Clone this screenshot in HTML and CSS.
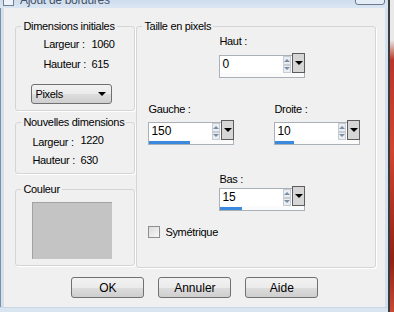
FILE: index.html
```html
<!DOCTYPE html>
<html lang="fr">
<head>
    <meta charset="UTF-8">
    <title>Ajout de bordures</title>
    <link rel="stylesheet" href="styles.css">
</head>
<body>
    <div class="window">
        <!-- barre de titre (coupée) -->
        <div class="titlebar">
            <span class="title-icon"></span>
            <span class="title-text">Ajout de bordures</span>
            <span class="close-btn"></span>
        </div>

        <div class="frame-row">
            <div class="frame-left"></div>
            <div class="dialog">
                <div class="panels">
                    <div class="left-col">
                        <fieldset class="group group-init">
                            <legend>Dimensions initiales</legend>
                            <div class="group-body">
                                <div class="dim-row"><span class="dim-label">Largeur :</span><span>1060</span></div>
                                <div class="dim-row"><span class="dim-label">Hauteur :</span><span>615</span></div>
                                <div class="select">
                                    <span>Pixels</span>
                                    <span class="select-arrow"></span>
                                </div>
                            </div>
                        </fieldset>

                        <fieldset class="group group-new">
                            <legend>Nouvelles dimensions</legend>
                            <div class="group-body">
                                <div class="dim-row"><span class="dim-label">Largeur :</span><span class="dim-value">1220</span></div>
                                <div class="dim-row"><span class="dim-label">Hauteur :</span><span>630</span></div>
                            </div>
                        </fieldset>

                        <fieldset class="group group-color">
                            <legend>Couleur</legend>
                            <div class="group-body">
                                <div class="swatch"></div>
                            </div>
                        </fieldset>
                    </div>

                    <fieldset class="group group-size">
                        <legend>Taille en pixels</legend>
                        <div class="group-body">
                            <div class="size-row row-top">
                                <div class="field">
                                    <span class="field-label">Haut :</span>
                                    <div class="spin">
                                        <div class="spin-main">
                                            <span class="spin-input">0</span>
                                            <span class="spin-arrows"><i class="up"></i><i class="down"></i></span>
                                            <span class="spin-drop"></span>
                                        </div>
                                        <div class="spin-track"><div class="spin-fill" style="width: 0px"></div></div>
                                    </div>
                                </div>
                            </div>

                            <div class="size-row row-mid">
                                <div class="field">
                                    <span class="field-label">Gauche :</span>
                                    <div class="spin">
                                        <div class="spin-main">
                                            <span class="spin-input">150</span>
                                            <span class="spin-arrows"><i class="up"></i><i class="down"></i></span>
                                            <span class="spin-drop"></span>
                                        </div>
                                        <div class="spin-track"><div class="spin-fill" style="width: 41px"></div></div>
                                    </div>
                                </div>
                                <div class="field field-right">
                                    <span class="field-label">Droite :</span>
                                    <div class="spin">
                                        <div class="spin-main">
                                            <span class="spin-input">10</span>
                                            <span class="spin-arrows"><i class="up"></i><i class="down"></i></span>
                                            <span class="spin-drop"></span>
                                        </div>
                                        <div class="spin-track"><div class="spin-fill" style="width: 19px"></div></div>
                                    </div>
                                </div>
                            </div>

                            <div class="size-row row-bottom">
                                <div class="field">
                                    <span class="field-label">Bas :</span>
                                    <div class="spin">
                                        <div class="spin-main">
                                            <span class="spin-input">15</span>
                                            <span class="spin-arrows"><i class="up"></i><i class="down"></i></span>
                                            <span class="spin-drop"></span>
                                        </div>
                                        <div class="spin-track"><div class="spin-fill" style="width: 22px"></div></div>
                                    </div>
                                </div>
                            </div>

                            <label class="check-row">
                                <span class="checkbox"></span>
                                <span>Symétrique</span>
                            </label>
                        </div>
                    </fieldset>
                </div>

                <div class="buttons">
                    <button class="btn">OK</button>
                    <button class="btn">Annuler</button>
                    <button class="btn">Aide</button>
                </div>
            </div>
            <div class="frame-right"></div>
        </div>

        <div class="bottom-strip"></div>
    </div>
    <div class="backdrop"></div>
</body>
</html>
```

FILE: styles.css
```css
* {
    margin: 0;
    padding: 0;
    box-sizing: border-box;
}

body {
    font-family: 'Liberation Sans', Arial, sans-serif;
    font-size: 11px;
    letter-spacing: -0.3px;
    color: #000;
    width: 394px;
    height: 312px;
    overflow: hidden;
    display: flex;
    background: #f0f0f0;
}

.window {
    width: 390px;
    display: flex;
    flex-direction: column;
    border-right: 2px solid #3c3c3c;
}

/* barre de titre */
.titlebar {
    height: 8px;
    background: linear-gradient(#cfdcec, #dbe6f3);
    display: flex;
    align-items: flex-end;
    overflow: hidden;
    padding-left: 3px;
}

.title-icon {
    width: 11px;
    height: 14px;
    margin-bottom: 2px;
    border: 1px solid #6f7f92;
    background: #eef3f9;
}

.title-text {
    margin-left: 6px;
    margin-bottom: 2px;
    font-size: 12px;
    line-height: 12px;
    color: #44546a;
}

.close-btn {
    margin-left: auto;
    margin-right: 3px;
    width: 30px;
    height: 14px;
    align-self: flex-start;
    margin-top: -9px;
    border: 1px solid #6b7a8e;
    border-radius: 0 0 3px 3px;
    background: #e4ecf5;
}

.frame-row {
    flex: 1;
    display: flex;
}

.frame-left {
    width: 5px;
    background: linear-gradient(90deg, #7d8ea2 0, #7d8ea2 1px, #d4e0ee 1px);
}

.frame-right {
    width: 3px;
    background: #d4e0ee;
}

.bottom-strip {
    height: 5px;
    background: #dae5f2;
    border-top: 1px solid #c9d6e6;
}

.backdrop {
    flex: 1;
    background: linear-gradient(#e9e9e9 0, #e9e9e9 40px, #b9352a 60px, #d2452e 150px, #8e2216 260px, #c74a35);
}

/* corps du dialogue */
.dialog {
    flex: 1;
    display: flex;
    flex-direction: column;
    background: #f0f0f0;
    padding: 11px 9px 0 11px;
}

.panels {
    display: flex;
    gap: 1px;
}

.left-col {
    width: 120px;
    display: flex;
    flex-direction: column;
}

.group {
    border: 1px solid #d5d5d5;
    border-radius: 3px;
    min-width: 0;
    padding: 0;
    box-shadow: 1px 1px 0 #fff;
}

.group legend {
    margin-left: 5px;
    padding: 0 2px;
    height: 14px;
    line-height: 14px;
    white-space: nowrap;
}

.group-init {
    height: 92px;
    margin-bottom: 4px;
}

.group-init .group-body {
    padding: 1px 0 0 15px;
}

.group-init .dim-row {
    height: 20px;
    line-height: 20px;
    padding-left: 12px;
}

.group-new {
    height: 59px;
    margin-bottom: 8px;
}

.group-new .group-body {
    padding: 4px 0 0 16px;
}

.group-new .dim-row {
    height: 18px;
    line-height: 18px;
}

.dim-row {
    display: flex;
}

.dim-label {
    width: 48px;
}

.dim-value {
    position: relative;
    top: -2px;
}

.select {
    margin-top: 10px;
    width: 81px;
    height: 20px;
    border: 1px solid #707070;
    border-radius: 3px;
    background: linear-gradient(#f2f2f2 0, #ebebeb 50%, #dddddd 50%, #cfcfcf 100%);
    display: flex;
    align-items: center;
    padding: 0 5px 0 3px;
}

.select-arrow {
    margin-left: auto;
    border-left: 4px solid transparent;
    border-right: 4px solid transparent;
    border-top: 4px solid #000;
}

.group-color {
    height: 84px;
}

.group-color .group-body {
    padding: 6px 0 0 16px;
}

.swatch {
    width: 80px;
    height: 57px;
    background: #c4c4c4;
    border-top: 1px solid #a2a2a2;
    border-left: 1px solid #a2a2a2;
}

/* taille en pixels */
.group-size {
    width: 240px;
    height: 249px;
}

.group-size .group-body {
    padding: 1px 0 0 11px;
}

.size-row {
    display: flex;
}

.row-top {
    padding-left: 71px;
}

.row-mid {
    margin-top: 24px;
}

.row-bottom {
    margin-top: 27px;
    padding-left: 71px;
}

.field {
    width: 86px;
    display: flex;
    flex-direction: column;
}

.field-right {
    margin-left: 40px;
}

.field-label {
    height: 14px;
    line-height: 14px;
    margin-bottom: 7px;
}

.row-mid .field-label {
    margin-bottom: 6px;
}

.row-bottom .field-label {
    margin-bottom: 2px;
}

.spin {
    display: flex;
    flex-direction: column;
}

.spin-main {
    display: flex;
    height: 18px;
}

.spin-input {
    flex: 1;
    background: #fff;
    border: 1px solid #a9b0b8;
    border-right: none;
    border-bottom: none;
    padding-left: 2px;
    font-size: 12px;
    line-height: 16px;
    letter-spacing: 0;
}

.spin-arrows {
    width: 10px;
    background: #fff;
    border-top: 1px solid #a9b0b8;
    display: flex;
    flex-direction: column;
}

.spin-arrows i {
    flex: 1;
    margin: 0 1px;
    background: #eaeef3;
    border: 1px solid #c6ccd4;
    display: flex;
    align-items: center;
    justify-content: center;
}

.spin-arrows .up::after {
    content: "";
    border-left: 3px solid transparent;
    border-right: 3px solid transparent;
    border-bottom: 3px solid #7b8ca3;
}

.spin-arrows .down::after {
    content: "";
    border-left: 3px solid transparent;
    border-right: 3px solid transparent;
    border-top: 3px solid #7b8ca3;
}

.spin-drop {
    width: 13px;
    height: 20px;
    margin-top: -2px;
    border: 1px solid #5c5c5c;
    background: #d6d6d6;
    display: flex;
    align-items: center;
    justify-content: center;
}

.spin-drop::after {
    content: "";
    border-left: 4px solid transparent;
    border-right: 4px solid transparent;
    border-top: 4px solid #000;
}

.spin-track {
    height: 5px;
    background: #fbfbfb;
    border: 1px solid #a9b0b8;
    border-top: none;
    padding-top: 1px;
}

.spin-fill {
    height: 3px;
    background: #3b89dc;
}

.check-row {
    margin-top: 15px;
    display: flex;
    align-items: center;
    gap: 5px;
}

.checkbox {
    width: 12px;
    height: 12px;
    border: 1px solid #8e8f8f;
    background: linear-gradient(135deg, #dcdcdc, #f7f7f7);
}

/* boutons */
.buttons {
    display: flex;
    justify-content: center;
    gap: 14px;
    margin-top: 9px;
    padding-right: 2px;
}

.btn {
    width: 73px;
    height: 21px;
    border: 1px solid #707070;
    border-radius: 3px;
    background: linear-gradient(#f2f2f2 0, #ebebeb 50%, #dddddd 50%, #cfcfcf 100%);
    font-family: inherit;
    font-size: 12px;
    color: #000;
}
```
